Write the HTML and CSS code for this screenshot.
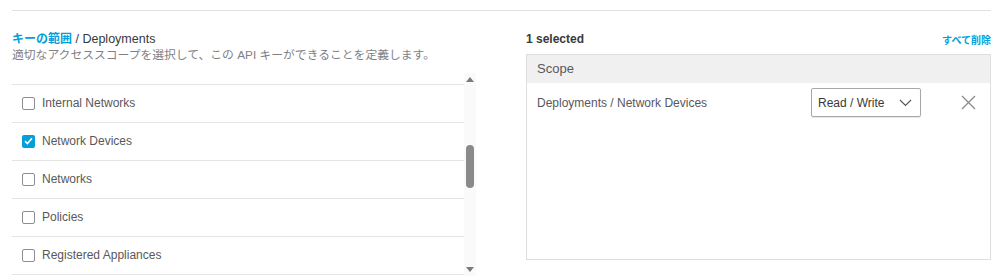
FILE: index.html
```html
<!DOCTYPE html>
<html>
<head>
  <title>API Key Scope</title>
  <link rel="stylesheet" href="styles.css">
</head>
<body>
  <div class="page">
    <div class="rule"></div>
    <div class="columns">
      <div class="picker">
        <div class="title"><a class="crumb">キーの範囲</a> / Deployments</div>
        <div class="hint">適切なアクセススコープを選択して、この API キーができることを定義します。</div>
        <div class="list-wrap">
          <div class="list">
            <div class="stub"></div>
            <label class="row"><span class="box"></span>Internal Networks</label>
            <label class="row"><span class="box checked">
              <svg width="9" height="8" viewBox="0 0 9 8"><path d="M1 4.2 L3.4 6.5 L8 1.2" fill="none" stroke="#fff" stroke-width="1.6"/></svg>
            </span>Network Devices</label>
            <label class="row"><span class="box"></span>Networks</label>
            <label class="row"><span class="box"></span>Policies</label>
            <label class="row"><span class="box"></span>Registered Appliances</label>
          </div>
          <div class="scrollbar">
            <span class="arrow up"></span>
            <span class="thumb"></span>
            <span class="arrow down"></span>
          </div>
        </div>
      </div>

      <div class="selected">
        <div class="selected-head">
          <span class="count">1 selected</span>
          <a class="clear">すべて削除</a>
        </div>
        <div class="scope-table">
          <div class="scope-th">Scope</div>
          <div class="scope-row">
            <span class="scope-name">Deployments / Network Devices</span>
            <div class="access">
              <span>Read / Write</span>
              <svg width="13" height="8" viewBox="0 0 13 8"><path d="M1 1 L6.5 6.5 L12 1" fill="none" stroke="#58585b" stroke-width="1.2"/></svg>
            </div>
            <svg class="remove" width="15" height="15" viewBox="0 0 15 15"><path d="M1 1 L14 14 M14 1 L1 14" stroke="#8b8b8f" stroke-width="1.3"/></svg>
          </div>
        </div>
      </div>
    </div>
  </div>
</body>
</html>
```

FILE: styles.css
```css
body {
  margin: 0;
  font-family: "Liberation Sans", Arial, "Noto Sans CJK JP", sans-serif;
  font-size: 12px;
  color: #39393b;
  background: #fff;
}
.page {
  padding: 0 8px 0 12px;
}
.rule {
  margin-top: 10px;
  border-top: 1px solid #e1e1e1;
}
.columns {
  display: flex;
  gap: 50px;
  margin-top: 20px;
}
.picker {
  width: 464px;
}
.title {
  font-size: 12.5px;
  line-height: 16px;
}
.crumb {
  color: #049fd9;
  font-weight: bold;
  font-size: 12px;
}
.hint {
  font-size: 11.8px;
  line-height: 16px;
  color: #7f7f86;
}
.list-wrap {
  display: flex;
  margin-top: 10px;
  height: 203px;
}
.list {
  flex: 1;
  overflow: hidden;
}
.stub {
  height: 11px;
  border-bottom: 1px solid #e4e4e6;
}
.row {
  display: flex;
  align-items: center;
  gap: 7px;
  height: 37px;
  padding-left: 10px;
  padding-bottom: 1px;
  box-sizing: border-box;
  height: 38px;
  border-bottom: 1px solid #e4e4e6;
  color: #58585b;
}
.box {
  width: 11px;
  height: 11px;
  border: 1px solid #8e8e92;
  border-radius: 2px;
  display: flex;
  align-items: center;
  justify-content: center;
}
.box.checked {
  width: 13px;
  height: 13px;
  border: none;
  background: #049fd9;
}
.scrollbar {
  width: 12px;
  background: #fafafa;
  display: flex;
  flex-direction: column;
  align-items: center;
}
.arrow {
  width: 0;
  height: 0;
  border-left: 4px solid transparent;
  border-right: 4px solid transparent;
}
.arrow.up {
  margin-top: 4px;
  border-bottom: 5px solid #7a7a7a;
}
.arrow.down {
  margin-top: auto;
  margin-bottom: 4px;
  border-top: 5px solid #7a7a7a;
}
.thumb {
  margin-top: 63px;
  width: 8px;
  height: 43px;
  border-radius: 4px;
  background: #8a8a8a;
}
.selected {
  width: 465px;
}
.selected-head {
  display: flex;
  justify-content: space-between;
  align-items: flex-end;
  height: 16px;
}
.count {
  font-weight: bold;
  line-height: 16px;
}
.clear {
  color: #049fd9;
  font-size: 10px;
  font-weight: bold;
  line-height: 12px;
}
.scope-table {
  margin-top: 7px;
  height: 204px;
  border: 1px solid #dedede;
}
.scope-th {
  height: 28px;
  line-height: 28px;
  padding-left: 10px;
  background: #f0f0f0;
  color: #58585b;
  font-size: 13px;
}
.scope-row {
  display: flex;
  align-items: center;
  height: 39px;
  padding-left: 10px;
  color: #58585b;
}
.scope-name {
  flex: 1;
}
.access {
  height: 27px;
  width: 94px;
  border: 1px solid #a8a8ab;
  border-radius: 2px;
  box-shadow: 0 1px 1px rgba(0, 0, 0, 0.1);
  display: flex;
  align-items: center;
  justify-content: space-between;
  padding: 0 8px 0 6px;
  color: #39393b;
}
.remove {
  margin: 0 14px 0 40px;
}
```
